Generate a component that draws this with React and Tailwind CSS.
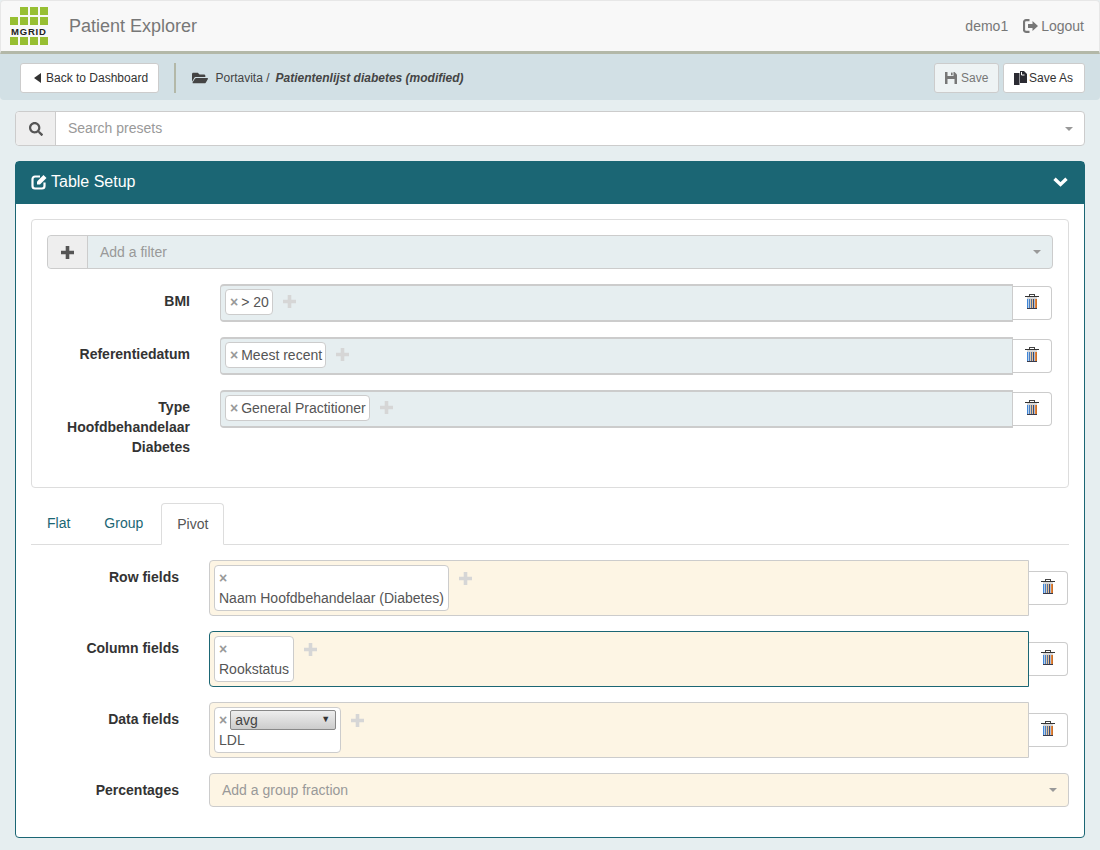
import { FaSearch, FaFolderOpen } from "react-icons/fa";

const sans = "font-['Liberation_Sans',Arial,sans-serif]";

const Logo = () => (
  <svg width="38" height="38" viewBox="0 0 38 38" className="block">
    {[10, 20, 30].map((x) => <rect key={x} x={x} y="0" width="8" height="8" fill="#97bf32" />)}
    {[0, 10, 20, 30].map((x) => <rect key={x} x={x} y="10" width="8" height="8" fill="#97bf32" />)}
    {[0, 10, 20, 30].map((x) => <rect key={x} x={x} y="30" width="8" height="8" fill="#97bf32" />)}
    <text x="1" y="28" fontSize="9.5" fontWeight="700" letterSpacing="0.8" fill="#222" fontFamily="Liberation Sans">MGRID</text>
  </svg>
);

const Caret = ({ className = "" }) => (
  <span className={`inline-block w-0 h-0 border-x-[4px] border-x-transparent border-t-[4px] border-t-[#999] ${className}`} />
);

const Plus = ({ size = 13, color = "#d6d6d6", className = "" }) => (
  <svg width={size} height={size} viewBox="0 0 13 13" className={`block shrink-0 ${className}`}>
    <path d="M4.7 0h3.6v4.7H13v3.6H8.3V13H4.7V8.3H0V4.7h4.7z" fill={color} />
  </svg>
);

// striped bin, same drawing everywhere
const Trash = () => (
  <svg width="14" height="16" viewBox="0 0 14 16" className="block mb-[2px]">
    <rect x="4.5" y="0.5" width="5" height="2" fill="none" stroke="#444" strokeWidth="1" />
    <rect x="0" y="2" width="14" height="1" fill="#333" />
    <rect x="2" y="3" width="10" height="2" fill="#d8d8d8" />
    {["#3f86d8", "#b9cfe8", "#4a7fc0", "#e0c8a8", "#506f9f", "#e8c090", "#3a4a70", "#a8c0e0", "#e8873a", "#c9702a"].map((c, i) => (
      <rect key={i} x={2 + i} y="5" width="1" height="9" fill={c} />
    ))}
    <rect x="2" y="14" width="10" height="1" fill="#3a3a48" />
  </svg>
);

const LogoutIcon = () => (
  <svg width="15" height="14" viewBox="0 0 15 14" className="block">
    <path d="M6.5 1.2H3a2 2 0 0 0-2 2v7.6a2 2 0 0 0 2 2h3.5" fill="none" stroke="#777" strokeWidth="2.2" />
    <path d="M5 5h4.5V2L15 7l-5.5 5V9H5z" fill="#777" />
  </svg>
);

const SaveIcon = () => (
  <svg width="12" height="12" viewBox="0 0 12 12" className="block">
    <path d="M0 0h9.5L12 2.5V12H0z" fill="#777" />
    <rect x="2.5" y="0" width="6" height="4" fill="#eef3f4" />
    <rect x="6" y="0.6" width="1.6" height="2.6" fill="#777" />
    <rect x="2.5" y="7" width="7" height="5" fill="#eef3f4" />
  </svg>
);

const SaveAsIcon = () => (
  <svg width="13" height="14" viewBox="0 0 13 14" className="block">
    <path d="M0 2h5.5v12H0z" fill="#2b2b33" />
    <path d="M6 0h4l3 3v9H6z" fill="#2b2b33" />
    <path d="M7.5 1v3h3" fill="none" stroke="#fff" strokeWidth="1" />
  </svg>
);

const EditIcon = () => (
  <svg width="17" height="16" viewBox="0 0 17 16" className="block">
    <path d="M9 2.5H4A2.5 2.5 0 0 0 1.5 5v7A2.5 2.5 0 0 0 4 14.5h7a2.5 2.5 0 0 0 2.5-2.5V8.5" fill="none" stroke="#fff" strokeWidth="2.2" />
    <path d="M6 7.5 12.5 1 15.5 4 9 10.5H6z" fill="#fff" />
  </svg>
);

const Chevron = () => (
  <svg width="15" height="10" viewBox="0 0 15 10" className="block">
    <path d="M1.5 1.8 7.5 7.5 13.5 1.8" fill="none" stroke="#fff" strokeWidth="3.4" />
  </svg>
);

const Chip = ({ children }) => (
  <span className="inline-flex items-center h-[26px] pl-[4px] pr-[3px] bg-white border border-[#ccc] rounded-[4px] text-[#555] whitespace-nowrap">
    <span className="text-[#999] font-bold mr-[3px]">×</span>
    {children}
  </span>
);

const FilterRow = ({ label, value, className = "" }) => (
  <div className={`flex items-start mr-[1px] ${className}`}>
    <label className="w-[143px] text-right font-bold text-[#333] leading-5 pt-[7px]">{label}</label>
    <div className="ml-[30px] flex-1 h-[38px] bg-[#e6eef0] border border-y-2 border-[#ccc] rounded-l-[4px] pl-[4px] pt-[3px] flex items-start">
      <Chip>{value}</Chip>
      <Plus className="ml-[10px] mt-[6px]" />
    </div>
    <button className="w-[39px] h-[34px] mt-[2px] bg-white border border-l-0 border-[#ccc] rounded-r-[4px] flex items-center justify-center">
      <Trash />
    </button>
  </div>
);

const PivotRow = ({ label, children, focus }) => (
  <div className="flex items-start mr-[1px]">
    <label className="w-[148px] text-right font-bold text-[#333] leading-5 pt-[7px]">{label}</label>
    <div className={`ml-[30px] flex-1 h-[56px] bg-[#fdf5e4] border rounded-l-[4px] pl-[4px] pt-[4px] flex items-start ${focus ? "border-[#1b6674]" : "border-[#ccc]"}`}>
      {children}
      <Plus className="ml-[10px] mt-[7px]" />
    </div>
    <button className="w-[39px] h-[34px] mt-[11px] bg-white border border-l-0 border-[#ccc] rounded-r-[4px] flex items-center justify-center">
      <Trash />
    </button>
  </div>
);

const PivotChip = ({ top, children }) => (
  <div className="bg-white border border-[#ccc] rounded-[4px] px-[4px] h-[46px] text-[#555] whitespace-nowrap">
    <div className="h-[22px] pt-[2px] flex items-center">
      <span className="text-[#999] font-bold">×</span>
      {top}
    </div>
    <div className="leading-[20px]">{children}</div>
  </div>
);

export default function App() {
  return (
    <div className={`${sans} text-[14px] bg-[#e6eef0] h-[850px] overflow-hidden`}>
      <nav className="h-[54px] bg-[#f8f8f8] border border-[#e7e7e7] border-b-[3px] border-b-[#b3b8a8] rounded-t-[4px] flex items-center pl-[9px] pr-[15px]">
        <Logo />
        <span className="ml-[21px] text-[18px] text-[#777]">Patient Explorer</span>
        <span className="ml-auto text-[#777]">demo1</span>
        <span className="ml-[15px] flex items-center text-[#777]">
          <LogoutIcon />
          <span className="ml-[3px]">Logout</span>
        </span>
      </nav>

      <div className="h-[46px] pt-[2px] bg-[#d2e0e5] rounded-b-[4px] flex items-center pl-[20px] pr-[15px] text-[12px]">
        <button className="h-[30px] w-[139px] pl-[13px] bg-white border border-[#ccc] rounded-[3px] flex items-center justify-start text-[#333]">
          <span className="w-0 h-0 border-y-[5.5px] border-y-transparent border-r-[7px] border-r-[#333] mr-[5px]" />
          Back to Dashboard
        </button>
        <span className="ml-[15px] w-[2px] h-[30px] bg-[#b3b8a8]" />
        <FaFolderOpen className="ml-[16px] text-[16px] text-[#444]" />
        <span className="ml-[7.5px] text-[#444]">Portavita /</span>
        <span className="ml-[6px] font-bold italic text-[#444]">Patientenlijst diabetes (modified)</span>
        <button className="ml-auto h-[30px] w-[65px] pl-[10px] bg-[#eef3f4] border border-[#ccc] rounded-[3px] flex items-center justify-start text-[#777]">
          <span className="mr-[4px]"><SaveIcon /></span>
          Save
        </button>
        <button className="ml-[4px] h-[30px] w-[82px] pl-[10px] bg-white border border-[#ccc] rounded-[3px] flex items-center justify-start text-[#333]">
          <span className="mr-[2px]"><SaveAsIcon /></span>
          Save As
        </button>
      </div>

      <div className="mx-[15px] mt-[11px] h-[35px] flex bg-white border border-[#ccc] rounded-[4px]">
        <span className="w-[40px] bg-[#eee] border-r border-[#ccc] rounded-l-[4px] flex items-center justify-center text-[#555]">
          <FaSearch className="text-[14px]" />
        </span>
        <span className="flex-1 pl-[12px] flex items-center text-[#999]">Search presets</span>
        <span className="pr-[11px] flex items-center"><Caret /></span>
      </div>

      <section className="mx-[15px] mt-[15px] h-[677px] bg-white border border-[#1b6674] rounded-[4px]">
        <header className="h-[42px] pb-[2px] bg-[#1b6674] flex items-center pl-[15px] pr-[16px] text-white text-[16px]">
          <span className="mr-[3px]"><EditIcon /></span>
          Table Setup
          <span className="ml-auto"><Chevron /></span>
        </header>

        <div className="px-[15px] pt-[15px]">
          <div className="h-[269px] border border-[#ddd] rounded-[4px] px-[15px] pt-[15px]">
            <div className="h-[34px] flex bg-[#e6eef0] border border-[#ccc] rounded-[4px]">
              <span className="w-[40px] bg-[#eee] border-r border-[#ccc] rounded-l-[4px] flex items-center justify-center">
                <Plus color="#555" />
              </span>
              <span className="flex-1 pl-[12px] flex items-center text-[#999]">Add a filter</span>
              <span className="pr-[11px] flex items-center"><Caret /></span>
            </div>
            <FilterRow className="mt-[15px]" label="BMI" value="> 20" />
            <FilterRow className="mt-[15px]" label="Referentiedatum" value="Meest recent" />
            <FilterRow className="mt-[15px]" label={<>Type<br />Hoofdbehandelaar<br />Diabetes</>} value="General Practitioner" />
          </div>

          <div className="mt-[15px] h-[42px] border-b border-[#ddd] flex items-end pl-[1px]">
            <a className="h-[41px] px-[15px] mr-[4px] flex items-center text-[#1b6674]">Flat</a>
            <a className="h-[41px] px-[15px] mr-[3px] flex items-center text-[#1b6674]">Group</a>
            <a className="h-[42px] -mb-px px-[15px] flex items-center text-[#555] bg-white border border-[#ddd] border-b-white rounded-t-[4px]">Pivot</a>
          </div>

          <div className="mt-[15px] flex flex-col gap-[15px]">
            <PivotRow label="Row fields">
              <PivotChip>Naam Hoofdbehandelaar (Diabetes)</PivotChip>
            </PivotRow>
            <PivotRow label="Column fields" focus>
              <PivotChip>Rookstatus</PivotChip>
            </PivotRow>
            <PivotRow label="Data fields">
              <PivotChip
                top={
                  <span className="ml-[3px] w-[106px] h-[20px] pl-[4px] pr-[5px] flex items-center justify-between border border-[#888] rounded-[2px] bg-gradient-to-b from-[#eee] to-[#ccc] text-[#444]">
                    avg
                    <span className="text-[9px] text-[#333]">▼</span>
                  </span>
                }
              >
                LDL
              </PivotChip>
            </PivotRow>
            <div className="flex items-start">
              <label className="w-[148px] text-right font-bold text-[#333] leading-5 pt-[7px]">Percentages</label>
              <div className="ml-[30px] flex-1 h-[34px] bg-[#fdf5e4] border border-[#ccc] rounded-[4px] flex items-center pl-[12px] pr-[11px] text-[#999]">
                Add a group fraction
                <Caret className="ml-auto" />
              </div>
            </div>
          </div>
        </div>
      </section>
    </div>
  );
}
